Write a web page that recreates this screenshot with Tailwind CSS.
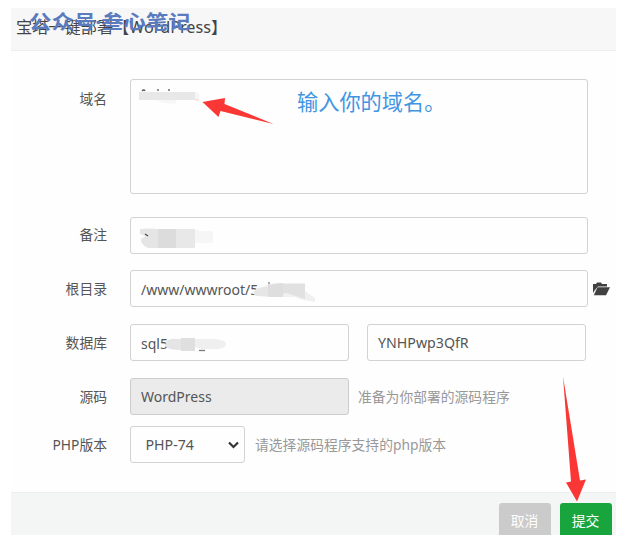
<!DOCTYPE html>
<html lang="zh-CN">
<head>
<meta charset="utf-8">
<title>宝塔一键部署</title>
<script src="https://cdn.jsdelivr.net/npm/@tailwindcss/browser@4"></script>
</head>
<body class="w-[618px] h-[536px] overflow-hidden bg-white pl-[11px] pr-[2px] pt-2 font-['Noto_Sans','Noto_Sans_CJK_SC',sans-serif] text-[13.8px] text-[#555]">
<main class="relative flex h-[527px] w-[605px] flex-col bg-[#fefefe]">
  <header class="relative flex h-[43px] shrink-0 items-center border-b border-[#eee] bg-[#f7f7f7] pl-[5px] pb-1">
    <h1 class="whitespace-nowrap text-[16.2px] leading-6 text-[#444]">宝塔一键部署【WordPress】</h1>
    <div class="absolute left-[18px] top-[2px] flex origin-center scale-y-[.88] whitespace-nowrap text-[22.4px] font-bold leading-[24px] text-[#5b7bbf]"><span>公众号</span><span class="w-[5px] -indent-[1px]">·</span><span>叁心笔记</span></div>
  </header>

  <form class="flex grow flex-col pt-7">
    <div class="flex h-[115px]">
      <label class="w-[97px] pr-px pt-[10px] text-right leading-5">域名</label>
      <div class="relative ml-[22px] w-[458px] rounded-[3px] border border-[#d2d2d2] bg-[#fefefe]">
        <span class="absolute left-[166px] top-[7px] whitespace-nowrap text-[21.2px] leading-[30px] text-[#4195e2]">输入你的域名。</span>
        <svg class="absolute left-0 top-0" width="160" height="60" viewBox="131 80 160 60">
          <path d="M142 91q2-2 3 0M158 89v2M169 89v2" stroke="#555" stroke-width="1.3" fill="none"/>
          <path d="M139 93q4-3 12-1h45q4 0 3 8h-23v4l-12-1-8-3h-17z" fill="#f6f6f6"/>
          <path d="M139 92h56v8h-56z" fill="#e8e8e8"/>
          <path d="M195 100h4" stroke="#ffc9c9"/>
          <path d="M202.500 102l22.500-4-.5 6 49 20-53-13-2 6z" fill="#fa3734"/>
        </svg>
      </div>
    </div>

    <div class="mt-[22px] flex h-[38px] items-center">
      <label class="w-[97px] pr-px pt-px text-right">备注</label>
      <div class="relative ml-[22px] h-[37px] w-[458px] rounded-[3px] border border-[#d2d2d2]">
        <svg class="absolute left-0 top-0" width="110" height="35" viewBox="131 217 110 35">
          <path d="M140 229q6-4 18-1h36l6 2h13v12h-18v3h-45q-8-1-9-8l5-3-6-2z" fill="#f6f6f6"/>
          <path d="M140 228h18v19h-10q-8-4-7-9l5-3-6-2z" fill="#e5e5e5"/>
          <path d="M158 228h18v19h-18z" fill="#dcdcdc"/>
          <path d="M176 228h19v19h-19z" fill="#e8e8e8"/>
          <path d="M145 233l3 2" stroke="#444" stroke-width="1.2"/>
        </svg>
      </div>
    </div>

    <div class="mt-4 flex h-[37px] items-center">
      <label class="w-[97px] pr-px pt-px text-right">根目录</label>
      <div class="relative ml-[22px] flex h-[37px] w-[458px] items-center rounded-[3px] border border-[#d2d2d2] pl-[10px]">
        <span class="pt-px text-[14px]">/www/wwwroot/5</span>
        <svg class="absolute left-[115px] top-0" width="80" height="35" viewBox="246 271 80 35">
          <path d="M269 282v5" stroke="#777" stroke-width="1.2"/>
          <path d="M254 291q3-4 9-4 8-5 20-4h22v8l10 7v4l-12-2-9-3-28 0q-6-1-10-1-3-2-2-5z" fill="#f0f0f0"/>
          <path d="M254 292q4-5 14-5v9h-12q-3-2-2-4z" fill="#e6e6e6"/>
          <path d="M268 285l15-2v14h-15z" fill="#dedede"/>
          <path d="M283 284h22v15l-9-3-10-3-3 1z" fill="#e1e1e1"/>
        </svg>
      </div>
      <svg class="ml-[5px]" width="18" height="16" viewBox="0 0 18 16" fill="#414141">
        <path d="M0 12V3h3l1-1.500h4L9 3h5v2.500H5L2 9z"/>
        <path d="M4.500 6.300H17l-4 8H.8z"/>
      </svg>
    </div>

    <div class="mt-[17px] flex h-[37px] items-center">
      <label class="w-[97px] pr-px pt-px text-right">数据库</label>
      <div class="relative ml-[22px] flex h-[37px] w-[219px] items-center rounded-[3px] border border-[#d2d2d2] pl-[10px]">
        <span class="pt-px text-[14px]">sql5</span>
        <svg class="absolute left-[29px] top-0" width="80" height="35" viewBox="160 325 80 35">
          <path d="M199 350.500h6" stroke="#777" stroke-width="1.3"/>
          <path d="M195 339h20q11 1 11 5t-8 5h-16l-7-2z" fill="#efefef"/>
          <path d="M166 342q3-4 10-3h19v11h-15q-12 0-15-4z" fill="#e5e5e5"/>
          <path d="M181 338h14v13h-14z" fill="#dfdfdf"/>
        </svg>
      </div>
      <div class="ml-[18px] flex h-[37px] w-[219px] items-center rounded-[3px] border border-[#d2d2d2] pl-[10px] pt-px text-[14.2px]">YNHPwp3QfR</div>
    </div>

    <div class="mt-[17px] flex h-[37px] items-center">
      <label class="w-[97px] pr-px pt-px text-right">源码</label>
      <div class="ml-[22px] flex h-[37px] w-[219px] items-center rounded-[3px] border border-[#ccc] bg-[#ebebeb] pl-[10px] text-[14px]">WordPress</div>
      <span class="ml-[9px] whitespace-nowrap pt-px text-[#999]">准备为你部署的源码程序</span>
    </div>

    <div class="mt-[11px] flex h-[37px] items-center">
      <label class="w-[97px] whitespace-nowrap pr-px pt-px text-right">PHP版本</label>
      <div class="ml-[22px] flex h-[37px] w-[115px] items-center justify-between rounded-[3px] border border-[#d2d2d2] pl-[14.5px] pr-[5px] text-[14.2px]">
        <span class="pt-px">PHP-74</span>
        <svg width="11" height="8" viewBox="0 0 11 8" fill="none" stroke="#333" stroke-width="2.2"><path d="M1 1.5l4.5 4.5L10 1.5"/></svg>
      </div>
      <span class="ml-[10px] whitespace-nowrap pt-px text-[#999]">请选择源码程序支持的php版本</span>
    </div>
  </form>

  <footer class="flex h-[43px] shrink-0 justify-end gap-[9px] overflow-hidden border-t border-[#ecefef] bg-[#f4f6f6] pr-1 pt-[10px] text-white">
    <button type="button" class="flex h-[36px] w-[52px] items-center justify-center rounded-[3px] bg-[#cbcbcb] pr-px">取消</button>
    <button type="button" class="flex h-[36px] w-[52px] items-center justify-center rounded-[3px] bg-[#19a53e] pr-px">提交</button>
  </footer>

  <svg class="absolute left-[551px] top-[368px]" width="26" height="126" viewBox="562 376 26 126"><path d="M563 376.500l17 104 6-1-9 22-11-19 5-1z" fill="#fa3734"/></svg>
</main>
</body>
</html>
